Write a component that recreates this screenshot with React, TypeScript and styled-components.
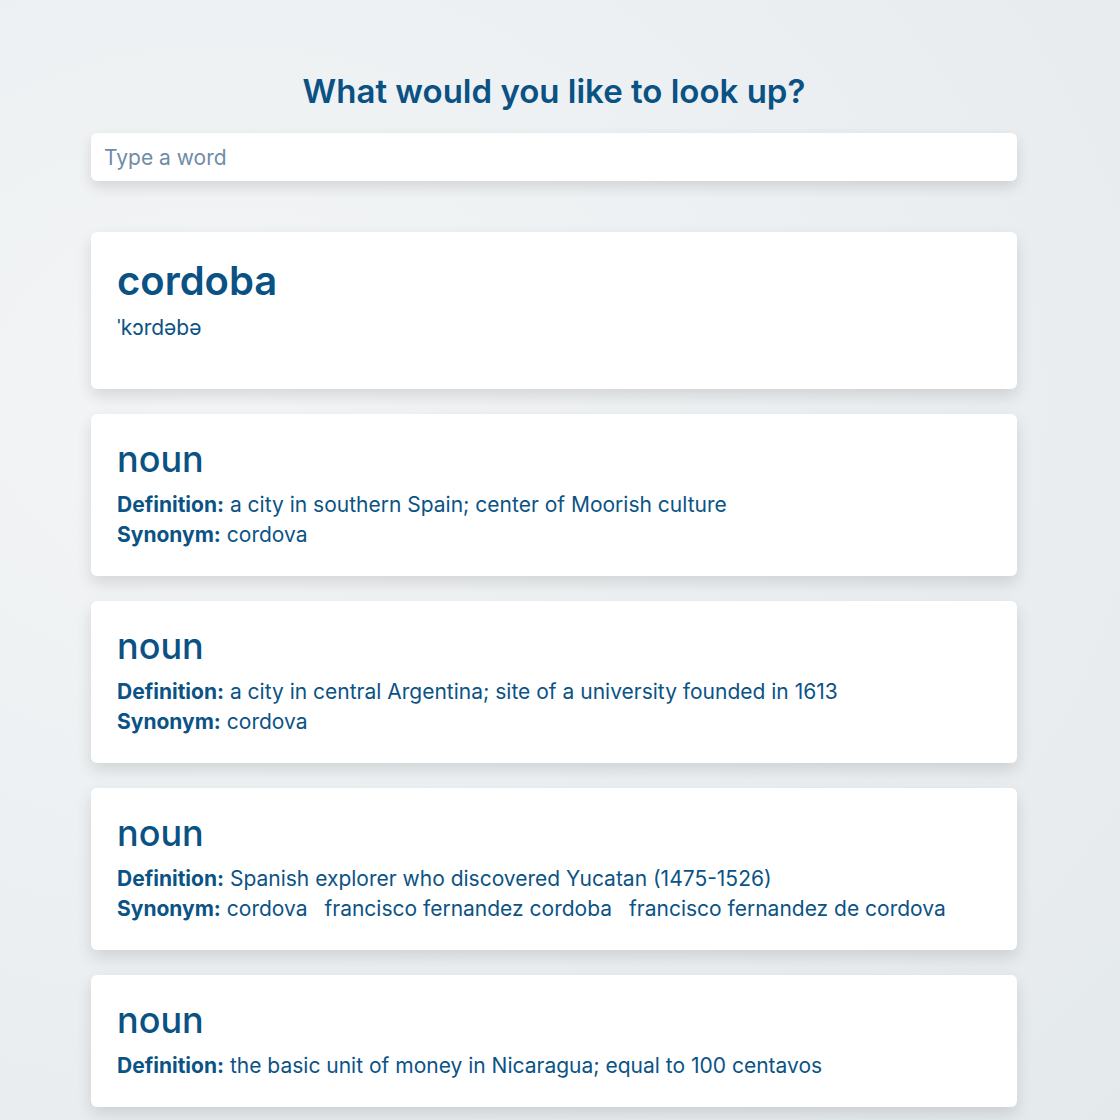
import React from 'react'
import styled, { createGlobalStyle } from 'styled-components'

const GlobalStyle = createGlobalStyle`
	html, body {
		margin: 0;
		padding: 0;
	}
	body {
		font-family: Inter, 'Noto Sans', sans-serif;
		color: #0b5385;
		background: radial-gradient(ellipse at 20% 35%, #f3f5f6 0%, #edf0f2 45%, #e4e9ec 100%);
		min-height: 1120px;
	}
`

const entries = [
	{
		partOfSpeech: 'noun',
		definition: 'a city in southern Spain; center of Moorish culture',
		synonyms: ['cordova'],
	},
	{
		partOfSpeech: 'noun',
		definition: 'a city in central Argentina; site of a university founded in 1613',
		synonyms: ['cordova'],
	},
	{
		partOfSpeech: 'noun',
		definition: 'Spanish explorer who discovered Yucatan (1475-1526)',
		synonyms: ['cordova', 'francisco fernandez cordoba', 'francisco fernandez de cordova'],
	},
	{
		partOfSpeech: 'noun',
		definition: 'the basic unit of money in Nicaragua; equal to 100 centavos',
		synonyms: [],
	},
]

function App() {
	return (
		<Page>
			<GlobalStyle />
			<Dictionary>
				<SearchSection>
					<Title>What would you like to look up?</Title>
					<SearchInput type='search' placeholder='Type a word' />
				</SearchSection>
				<Card>
					<Word>cordoba</Word>
					<Phonetic>ˈkɔrdəbə</Phonetic>
				</Card>
				{entries.map((item, index) => (
					<Card key={index}>
						<PartOfSpeech>{item.partOfSpeech}</PartOfSpeech>
						<Line>
							<strong>Definition:</strong> {item.definition}
						</Line>
						{item.synonyms.length > 0 && (
							<Line>
								<strong>Synonym:</strong>{' '}
								{item.synonyms.map((s, i) => (
									<Synonym key={i}>{s}</Synonym>
								))}
							</Line>
						)}
					</Card>
				))}
			</Dictionary>
		</Page>
	)
}

const Page = styled.div`
	padding: 71px 0 40px 91px;
`

const Dictionary = styled.div`
	width: 926px;
	display: flex;
	flex-direction: column;
	gap: 25px;
`

const SearchSection = styled.section`
	display: flex;
	flex-direction: column;
	gap: 22px;
	margin-bottom: 26px;
`

const Title = styled.h1`
	margin: 0;
	font-size: 33px;
	line-height: 40px;
	font-weight: 600;
	text-align: center;
	color: #0a5184;
`

const SearchInput = styled.input`
	box-sizing: border-box;
	width: 100%;
	height: 48px;
	border: none;
	border-radius: 6px;
	padding: 0 13px;
	font-family: inherit;
	font-size: 21px;
	color: #0b5385;
	background: #fff;
	box-shadow: 0 6px 14px rgba(0, 0, 0, 0.12);
	outline: none;
	&::placeholder {
		color: #6f8ca8;
	}
`

const Card = styled.div`
	background: #fff;
	border-radius: 6px;
	padding: 24px 26px 26px;
	box-shadow: 0 7px 16px rgba(0, 0, 0, 0.12);
`

const Word = styled.h2`
	margin: 0;
	font-size: 40px;
	line-height: 50px;
	font-weight: 600;
	color: #0a5184;
`

const Phonetic = styled.div`
	margin: 10px 0 23px;
	font-size: 21px;
	line-height: 24px;
`

const PartOfSpeech = styled.h3`
	margin: 0 0 2px;
	font-size: 36px;
	line-height: 42px;
	padding-bottom: 8px;
	font-weight: 500;
	color: #0a5184;
`

const Line = styled.div`
	font-size: 21px;
	line-height: 30px;
	strong {
		font-weight: 700;
	}
`

const Synonym = styled.span`
	margin-right: 17px;
`

export default App
